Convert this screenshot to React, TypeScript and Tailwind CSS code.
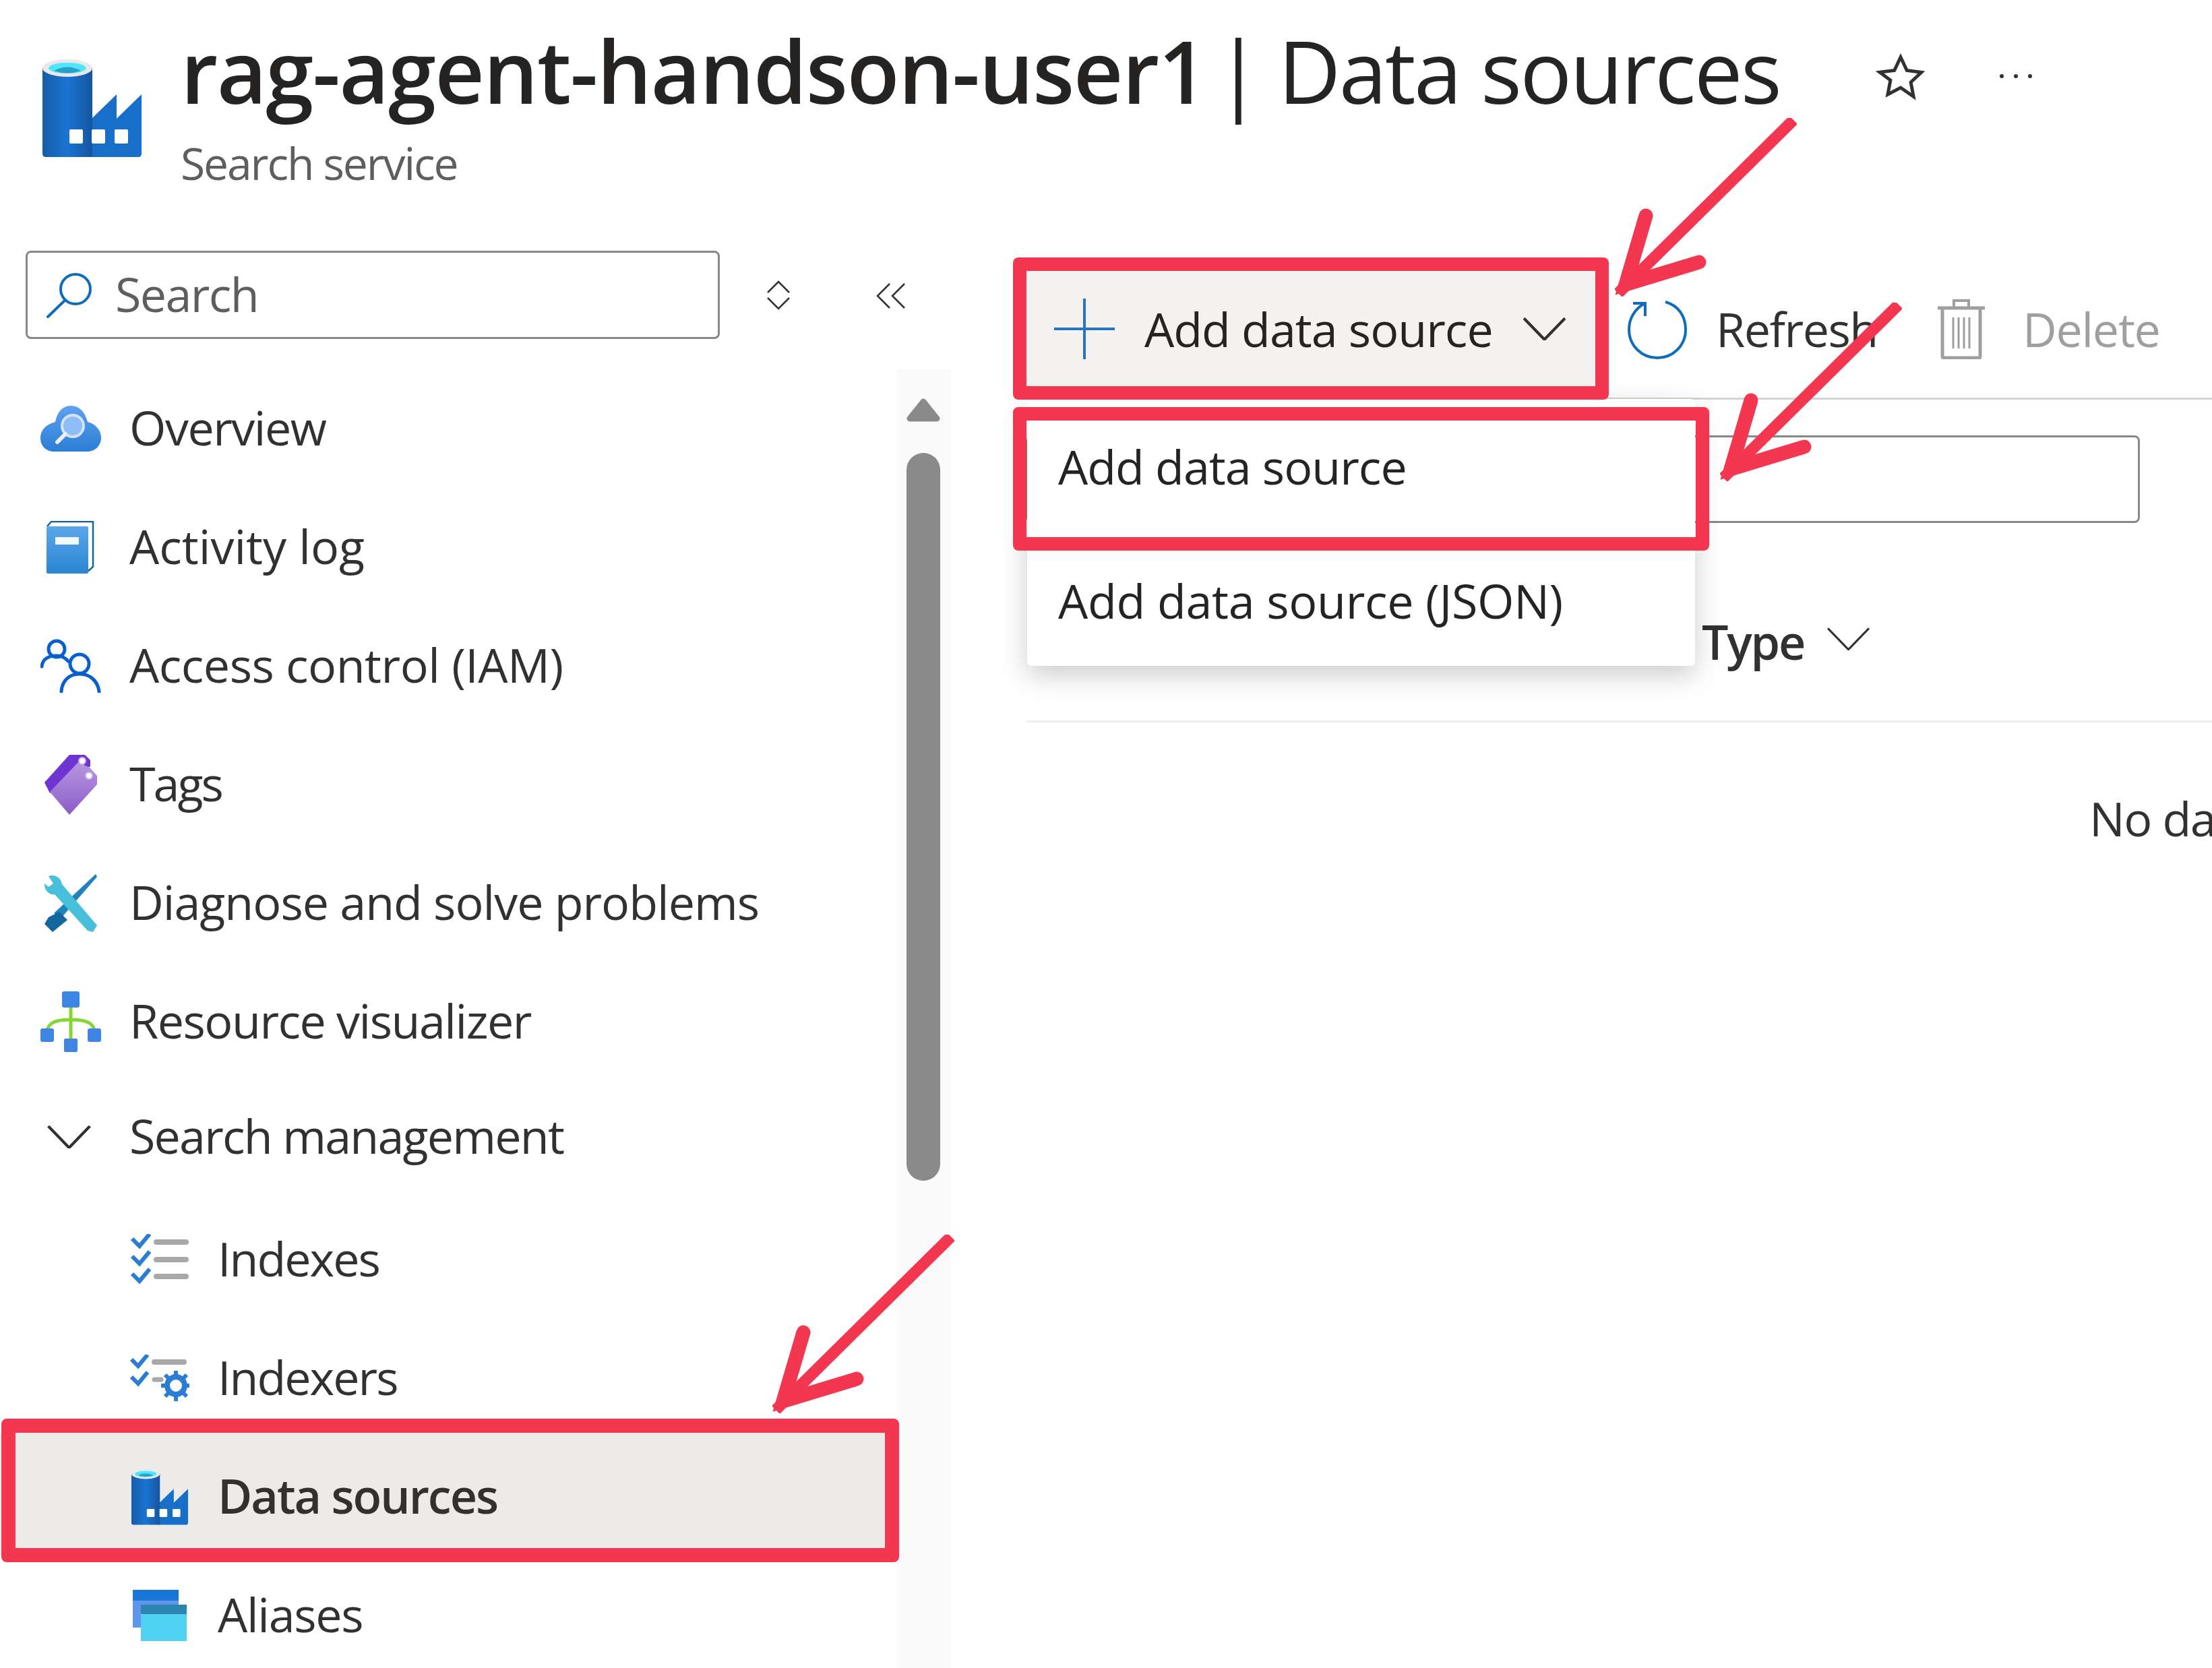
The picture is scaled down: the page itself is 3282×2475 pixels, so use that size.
import React from "react";

const Factory = ({ className, id }: { className: string; id: string }) => (
  <svg viewBox="0 0 147 145" className={className}>
    <defs>
      <linearGradient id={id} x1="0" x2="1" y1="0" y2="0">
        <stop offset="0" stopColor="#155ca8" />
        <stop offset="0.5" stopColor="#1a74d2" />
        <stop offset="1" stopColor="#15569f" />
      </linearGradient>
    </defs>
    <path d="M73 88L110 52V88L147 52V140Q147 145 142 145H73Z" fill="#176fca" />
    <path d="M0 12H74V145H5Q0 145 0 140Z" fill={`url(#${id})`} />
    <ellipse cx="37" cy="13" rx="37" ry="13" fill="#e9e9e9" />
    <ellipse cx="37" cy="13" rx="28" ry="8" fill="#50e6ff" />
    <path d="M17 17Q37 6 57 17Q37 24 17 17Z" fill="#2aa0c4" />
    <rect x="40" y="104" width="20" height="21" rx="2" fill="#fff" />
    <rect x="73" y="104" width="20" height="21" rx="2" fill="#fff" />
    <rect x="107" y="104" width="20" height="21" rx="2" fill="#fff" />
  </svg>
);

const CloudIcon = () => (
  <svg viewBox="0 0 90 68" className="w-[90px] h-[68px]">
    <defs>
      <linearGradient id="cloudg" x1="0" x2="0" y1="0" y2="1">
        <stop offset="0" stopColor="#5ea0ef" />
        <stop offset="1" stopColor="#2b7fd4" />
      </linearGradient>
    </defs>
    <path d="M20 68C8 68 0 59 0 48C0 36 8 28 22 24C25 9 33 0 45 0C58 0 66 9 70 24C82 27 90 36 90 48C90 59 81 68 70 68Z" fill="url(#cloudg)" />
    <circle cx="48" cy="30" r="16" fill="#8ebcf5" stroke="#d3e4f8" strokeWidth="4" />
    <path d="M37 42L25 54" stroke="#eaf2fb" strokeWidth="6" strokeLinecap="round" />
  </svg>
);

const BookIcon = () => (
  <svg viewBox="0 0 72 78" className="w-[72px] h-[78px]">
    <defs>
      <linearGradient id="bookg" x1="0" x2="0" y1="0" y2="1">
        <stop offset="0" stopColor="#5ba7ea" />
        <stop offset="1" stopColor="#2a84d2" />
      </linearGradient>
    </defs>
    <path d="M1 8L7 1H69V68L61 75" fill="none" stroke="#16639f" strokeWidth="2.5" />
    <rect x="0" y="8" width="62" height="70" rx="2" fill="url(#bookg)" />
    <rect x="13" y="24" width="35" height="11" fill="#f0f7fd" />
  </svg>
);

const PeopleIcon = () => (
  <svg viewBox="0 0 90 80" fill="none" stroke="#0a5fd0" strokeWidth="5" strokeLinecap="round" className="w-[90px] h-[80px]">
    <circle cx="24" cy="15" r="12" />
    <path d="M2 41C3 30 12 25 24 25C30 25 37 28 41 33" />
    <circle cx="58" cy="37" r="14" />
    <path d="M31 78C32 62 43 52 58 52C73 52 85 62 87 78" />
  </svg>
);

const TagIcon = () => (
  <svg viewBox="0 0 78 90" className="w-[78px] h-[90px]">
    <defs>
      <linearGradient id="tagg" x1="0" x2="0" y1="0" y2="1">
        <stop offset="0" stopColor="#b796e0" />
        <stop offset="1" stopColor="#8b5cc9" />
      </linearGradient>
    </defs>
    <path d="M0 42L37 1H60L68 9V18L8 58Z" fill="#6f35d2" />
    <path d="M8 56L50 12L67 20L78 32V45L37 90Z" fill="url(#tagg)" />
    <circle cx="56" cy="10" r="5" fill="#fff" stroke="#c9b3ea" strokeWidth="2" />
    <circle cx="66" cy="32" r="5" fill="#fff" stroke="#c9b3ea" strokeWidth="2" />
  </svg>
);

const ToolIcon = () => (
  <svg viewBox="0 0 78 86" className="w-[78px] h-[86px]">
    <path d="M76 0L78 4L24 66L14 58Z" fill="#1f84bd" />
    <path d="M22 56L34 68L12 86L0 74L6 64Z" fill="#14669e" />
    <path d="M0 14L6 19L13 14L6 3C14 0 24 4 26 15L78 76L72 86L64 84L15 30C8 32 -1 24 0 14Z" fill="#48c0dc" />
  </svg>
);

const TreeIcon = () => (
  <svg viewBox="0 0 90 90" className="w-[90px] h-[90px]">
    <path d="M45 15V76M10 58C12 46 24 42 45 42C66 42 78 46 80 58" fill="none" stroke="#86d633" strokeWidth="5" />
    <rect x="32" y="0" width="26" height="24" rx="3" fill="#3f86e4" />
    <rect x="0" y="55" width="20" height="20" rx="3" fill="#3f86e4" />
    <rect x="70" y="55" width="20" height="20" rx="3" fill="#3f86e4" />
    <rect x="35" y="70" width="20" height="20" rx="2" fill="#3f86e4" />
  </svg>
);

const Chevron = ({ className, sw = 4 }: { className: string; sw?: number }) => (
  <svg viewBox="0 0 60 32" fill="none" stroke="#323130" strokeWidth={sw} className={className}>
    <path d="M1 1L30 31L59 1" />
  </svg>
);

const IndexesIcon = () => (
  <svg viewBox="0 0 86 76" fill="none" className="w-[86px] h-[76px]">
    <g stroke="#2b7cd3" strokeWidth="6">
      <path d="M2 7L13 18L28 0" />
      <path d="M2 33L13 44L28 26" />
      <path d="M2 59L13 70L28 52" />
    </g>
    <g stroke="#a8a8a8" strokeWidth="8" strokeLinecap="round">
      <path d="M38 12H82" />
      <path d="M38 38H82" />
      <path d="M38 63H82" />
    </g>
  </svg>
);

const IndexersIcon = () => (
  <svg viewBox="0 0 88 70" fill="none" className="w-[88px] h-[70px]">
    <g stroke="#2b7cd3" strokeWidth="6">
      <path d="M2 7L12 17L26 0" />
      <path d="M2 33L12 43L26 26" />
    </g>
    <path d="M36 11H80" stroke="#a8a8a8" strokeWidth="8" strokeLinecap="round" />
    <path d="M36 37H46" stroke="#a8a8a8" strokeWidth="7" strokeLinecap="round" />
    <circle cx="68" cy="46" r="13" stroke="#2b7cd3" strokeWidth="8" />
    <path d="M68 24V32M68 60V69M46 46H54M82 46H88M52 30L58 36M78 56L84 62M52 62L58 56M78 36L84 30" stroke="#2b7cd3" strokeWidth="6" />
  </svg>
);

const AliasIcon = () => (
  <svg viewBox="0 0 80 76" className="w-[80px] h-[76px]">
    <rect x="0" y="0" width="68" height="56" fill="#5f95ea" />
    <rect x="0" y="0" width="68" height="16" fill="#1877d6" />
    <rect x="12" y="22" width="68" height="54" fill="#50d2f2" />
    <rect x="12" y="22" width="68" height="14" fill="#2b85ae" />
  </svg>
);

const RefreshIcon = () => (
  <svg viewBox="0 0 88 90" fill="none" stroke="#0f6cbd" strokeWidth="4" className="w-[88px] h-[90px]">
    <path d="M56 5C75 10 86 26 86 46C86 70 67 88 44 88C21 88 2 70 2 46C2 30 10 16 24 8" />
    <path d="M8 7H26V26" />
  </svg>
);

const TrashIcon = () => (
  <svg viewBox="0 0 70 90" fill="none" stroke="#a19f9d" strokeWidth="4" className="w-[70px] h-[90px]">
    <path d="M0 14H70" strokeWidth="5" />
    <path d="M24 14V3H46V14" />
    <path d="M7 14V86Q7 88 10 88H60Q63 88 63 86V14" strokeWidth="5" />
    <path d="M23 28V74M31 28V74M39 28V74M47 28V74" strokeWidth="3" />
  </svg>
);

const Arrow = ({ className }: { className: string }) => (
  <svg viewBox="0 0 270 265" fill="none" stroke="#f43750" className={`absolute w-[270px] h-[265px] ${className}`}>
    <path d="M5 260L265 3" strokeWidth="17" />
    <path d="M46 145L16 247L125 214" strokeWidth="21" strokeLinecap="round" strokeLinejoin="miter" />
  </svg>
);

const NavRow = ({ icon, label, track }: { icon: React.ReactNode; label: string; track: string }) => (
  <div className="h-[176px] flex items-center pl-[60px]">
    <div className="w-[90px] mr-[42px] flex justify-center">{icon}</div>
    <span className={`text-[70px] mt-[-4px] ${track}`}>{label}</span>
  </div>
);

const SubRow = ({ icon, label, track }: { icon: React.ReactNode; label: string; track: string }) => (
  <div className="h-[176px] flex items-center pl-[193px]">
    <div className="w-[88px] mr-[42px] flex justify-center">{icon}</div>
    <span className={`text-[70px] mt-[-4px] ${track}`}>{label}</span>
  </div>
);

export default function App() {
  return (
    <div className="relative w-[3282px] h-[2475px] overflow-hidden bg-white text-[#323130] font-['Open_Sans',sans-serif]">
      <header className="h-[340px] flex pl-[63px]">
        <Factory id="f1" className="w-[147px] h-[145px] mt-[88px] mr-[58px]" />
        <div className="flex flex-col">
          <div className="flex items-center h-[210px] whitespace-nowrap text-[128px] text-[#252423]">
            <span className="font-semibold tracking-[-1.6px]">rag-agent-handson-user1</span>
            <span className="ml-[12px]">|</span>
            <span className="ml-[24px] tracking-[-2.7px]">Data sources</span>
            <svg viewBox="0 0 24 24" fill="none" stroke="#323130" strokeWidth="1.6" className="w-[74px] h-[74px] ml-[142px] mt-[18px]">
              <path d="M12 2.5l3 6.4 7 .9-5.1 4.8 1.3 6.9L12 17.2l-6.2 3.3 1.3-6.9L2 9.8l7-.9z" />
            </svg>
            <span className="flex gap-[15px] ml-[110px] mt-[16px]">
              <i className="block w-[6px] h-[6px] rounded-full bg-[#323130]" />
              <i className="block w-[6px] h-[6px] rounded-full bg-[#323130]" />
              <i className="block w-[6px] h-[6px] rounded-full bg-[#323130]" />
            </span>
          </div>
          <div className="text-[66px] leading-none tracking-[-2.1px] text-[#605e5c] mt-[-2px]">Search service</div>
        </div>
      </header>

      <div className="flex h-[2135px]">
        <aside className="w-[1410px] shrink-0 flex flex-col">
          <div className="flex items-center pt-[32px] pl-[38px] h-[208px] pb-[45px]">
            <div className="w-[1030px] h-[131px] border-[3px] border-[#8a8886] rounded-[8px] flex items-center pl-[28px] gap-[34px]">
              <svg viewBox="0 0 68 68" fill="none" stroke="#0f6cbd" strokeWidth="4" className="w-[68px] h-[68px]">
                <circle cx="43" cy="25" r="22" />
                <path d="M28 41L2 66" strokeLinecap="round" />
              </svg>
              <span className="text-[70px] tracking-[-1.6px] text-[#605e5c] mt-[-3px]">Search</span>
            </div>
            <svg viewBox="0 0 36 44" fill="none" stroke="#323130" strokeWidth="2.5" className="w-[36px] h-[44px] ml-[69px]">
              <path d="M2 18L18 2L34 18M2 26L18 42L34 26" />
            </svg>
            <svg viewBox="0 0 44 40" fill="none" stroke="#323130" strokeWidth="2.5" className="w-[44px] h-[40px] ml-[127px] mt-[2px]">
              <path d="M20 2L2 20L20 38M42 2L24 20L42 38" />
            </svg>
          </div>
          <div className="flex flex-1 min-h-0">
            <nav className="w-[1330px] shrink-0">
              <NavRow icon={<CloudIcon />} label="Overview" track="tracking-[-1.5px]" />
              <NavRow icon={<BookIcon />} label="Activity log" track="tracking-[0px]" />
              <NavRow icon={<PeopleIcon />} label="Access control (IAM)" track="tracking-[-0.5px]" />
              <NavRow icon={<TagIcon />} label="Tags" track="tracking-[-3px]" />
              <NavRow icon={<ToolIcon />} label="Diagnose and solve problems" track="tracking-[-1px]" />
              <NavRow icon={<TreeIcon />} label="Resource visualizer" track="tracking-[-1.5px]" />
              <div className="h-[166px] mb-[11px] flex items-center pl-[60px]">
                <div className="w-[90px] mr-[42px] flex justify-center pr-[6px]">
                  <Chevron className="w-[65px] h-[34px]" />
                </div>
                <span className="text-[70px] tracking-[-1.8px] mt-[-4px]">Search management</span>
              </div>
              <SubRow icon={<IndexesIcon />} label="Indexes" track="tracking-[-2px]" />
              <SubRow icon={<IndexersIcon />} label="Indexers" track="tracking-[-2px]" />
              <div className="h-[176px] flex items-center pl-[193px] bg-[#edebe9] shadow-[0_-7px_0_#edebe9]">
                <div className="w-[88px] mr-[42px] flex justify-center">
                  <Factory id="f2" className="w-[84px] h-[84px]" />
                </div>
                <span className="text-[70px] tracking-[-2px] font-semibold mt-[-4px]">Data sources</span>
              </div>
              <SubRow icon={<AliasIcon />} label="Aliases" track="tracking-[-1.3px]" />
            </nav>
            <div className="w-[80px] bg-[#fafafa] flex flex-col items-center pt-[42px]">
              <svg viewBox="0 0 50 36" className="w-[50px] h-[36px]">
                <path d="M25 6L45 31H5Z" fill="#8a8a8a" stroke="#8a8a8a" strokeWidth="9" strokeLinejoin="round" />
              </svg>
              <div className="w-[50px] h-[1080px] mt-[46px] bg-[#8a8a8a] rounded-full" />
            </div>
          </div>
        </aside>

        <main className="flex-1 min-w-0 pl-[113px] overflow-hidden">
          <div className="pt-[62px] pb-[17px] border-b-[3px] border-[#d4d4d4] flex items-center">
            <div className="w-[845px] h-[171px] bg-[#f3f2f1] flex items-center pl-[41px] shrink-0">
              <svg viewBox="0 0 90 90" fill="none" stroke="#2b73bd" strokeWidth="4" className="w-[90px] h-[90px]">
                <path d="M45 0V90M0 45H90" />
              </svg>
              <span className="text-[70px] tracking-[-1px] ml-[44px] mt-[2px] text-[#252423]">Add data source</span>
              <Chevron className="w-[63px] h-[34px] ml-[45px]" />
            </div>
            <div className="ml-[47px] shrink-0"><RefreshIcon /></div>
            <span className="text-[70px] tracking-[-1.5px] ml-[43px] w-[329px] shrink-0 mt-[2px]">Refresh</span>
            <div className="shrink-0"><TrashIcon /></div>
            <span className="text-[70px] tracking-[-1.3px] ml-[56px] mt-[2px] text-[#a19f9d]">Delete</span>
          </div>
          <div className="mt-[53px] w-[1652px] h-[130px] border-[3px] border-[#8a8886] rounded-[8px]" />
          <div className="h-[296px] border-b-[3px] border-[#eeeeee] pl-[1002px] pt-[124px] flex items-start">
            <span className="text-[70px] tracking-[-2.2px] font-semibold">Type</span>
            <Chevron className="w-[63px] h-[34px] ml-[34px] mt-[31px]" sw={3} />
          </div>
          <div className="pl-[1577px] pt-[90px] text-[70px] tracking-[-1.5px] whitespace-nowrap">No data</div>
        </main>
      </div>

      <div className="absolute left-[1524px] top-[592px] w-[991px] h-[396px] bg-white rounded-[6px] shadow-[0_14px_40px_rgba(0,0,0,0.2)] pl-[46px] pt-[52px]">
        <div className="h-[199px] text-[70px] tracking-[-1px] leading-[96px] text-[#252423]">Add data source</div>
        <div className="text-[70px] tracking-[-0.3px] leading-[96px] text-[#252423]">Add data source (JSON)</div>
      </div>

      <div className="absolute left-[1503px] top-[382px] w-[884px] h-[211px] border-[20px] border-[#f43750] rounded-[8px]" />
      <div className="absolute left-[1503px] top-[604px] w-[1033px] h-[213px] border-[20px] border-[#f43750] rounded-[8px]" />
      <div className="absolute left-[2px] top-[2105px] w-[1332px] h-[213px] border-[21px] border-[#f43750] rounded-[8px]" />

      <Arrow className="left-[2396px] top-[175px]" />
      <Arrow className="left-[2552px] top-[449px]" />
      <Arrow className="left-[1146px] top-[1832px]" />
    </div>
  );
}
